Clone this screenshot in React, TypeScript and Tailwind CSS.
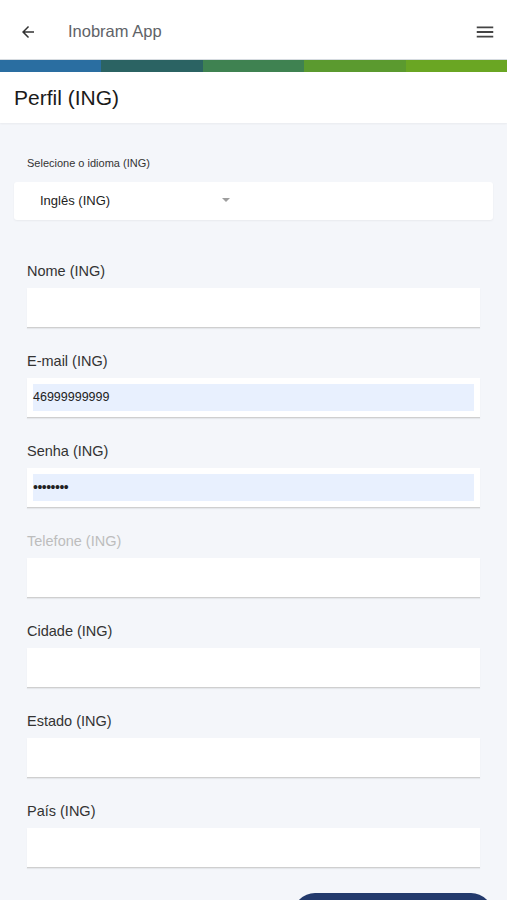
import React from 'react';

const font = { fontFamily: '"Liberation Sans", Arial, sans-serif' };

type Field = { label: string; value?: string; type?: string; disabled?: boolean; filled?: boolean };

const fields: Field[] = [
  { label: 'Nome (ING)' },
  { label: 'E-mail (ING)', value: '46999999999', filled: true },
  { label: 'Senha (ING)', value: '••••••••', type: 'password', filled: true },
  { label: 'Telefone (ING)', disabled: true },
  { label: 'Cidade (ING)' },
  { label: 'Estado (ING)' },
  { label: 'País (ING)' },
];

const FormField: React.FC<{ field: Field }> = ({ field }) => (
  <div className="flex flex-col">
    <label className={`text-[14.5px] leading-4 h-4 ${field.disabled ? 'text-[#bdbdbd]' : 'text-[#333333]'}`}>
      {field.label}
    </label>
    <div className="mt-[9px] h-[40px] bg-white border-b border-[#cfcfcf] shadow-[0_1px_1px_rgba(0,0,0,0.06)] flex items-center px-[6px]">
      {field.filled && (
        <div className="w-full h-[27px] bg-[#e8f0fe] flex items-center text-[12.5px] text-[#222]">
          {field.type === 'password' ? (
            <span className="text-[14px] tracking-[-0.5px]">{field.value}</span>
          ) : (
            field.value
          )}
        </div>
      )}
    </div>
  </div>
);

export default function App() {
  return (
    <div className="w-[507px] h-[900px] overflow-hidden bg-[#f4f6fa]" style={font}>
      {/* header */}
      <div className="h-[59px] bg-white flex items-center pt-[4px]">
        <svg className="ml-[19px]" width="18" height="18" viewBox="0 0 24 24">
          <path d="M20 11H7.83l5.59-5.59L12 4l-8 8 8 8 1.41-1.41L7.83 13H20v-2z" fill="#333" />
        </svg>
        <span className="ml-[31px] text-[16.5px] text-[#5f6368]">Inobram App</span>
        <svg className="ml-auto mr-[11px]" width="22" height="22" viewBox="0 0 24 24">
          <path d="M3 18h18v-2H3v2zm0-5h18v-2H3v2zm0-7v2h18V6H3z" fill="#444" />
        </svg>
      </div>

      {/* colour bar */}
      <div className="flex h-[13px] border-t border-[#d6dbe0]">
        <div className="flex-1 bg-[#2a6ea1]" />
        <div className="flex-1 bg-[#2b6363]" />
        <div className="flex-1 bg-[#3f8251]" />
        <div className="flex-1 bg-[#5b9a2f]" />
        <div className="flex-1 bg-[#6aa623]" />
      </div>

      {/* page title */}
      <div className="h-[51px] bg-white flex items-center px-[14px] shadow-[0_1px_2px_rgba(0,0,0,0.05)]">
        <h1 className="text-[21px] text-[#1a1a1a]">Perfil (ING)</h1>
      </div>

      {/* language */}
      <div className="px-[14px] pt-[32px]">
        <div className="pl-[13px] text-[11px] text-[#333]">Selecione o idioma (ING)</div>
        <div className="mt-[10px] h-[38px] bg-white rounded-[3px] shadow-[0_1px_2px_rgba(0,0,0,0.05)] flex items-center pl-[26px]">
          <span className="text-[13px] text-[#222] w-[180px]">Inglês (ING)</span>
          <svg width="8" height="5" viewBox="0 0 8 5" className="ml-[2px]">
            <path d="M0 0h8L4 4z" fill="#9e9e9e" />
          </svg>
        </div>
      </div>

      {/* fields */}
      <div className="px-[27px] pt-[43px] flex flex-col gap-[25px]">
        {fields.map((f) => (
          <FormField key={f.label} field={f} />
        ))}
      </div>

      <div className="flex justify-end pr-[14px] mt-[25px]">
        <button className="w-[200px] h-[44px] rounded-[22px] bg-[#233a6c]" />
      </div>
    </div>
  );
}
